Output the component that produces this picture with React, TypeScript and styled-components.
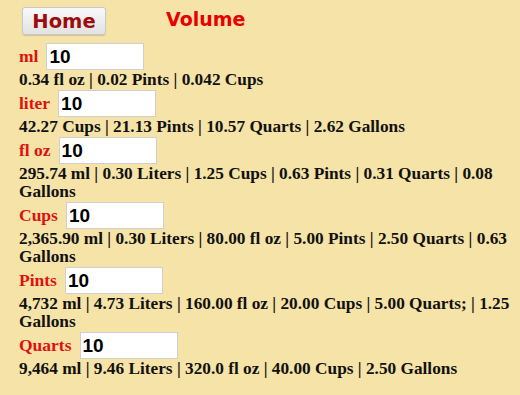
import React, { useState } from "react";
import styled, { createGlobalStyle } from "styled-components";

const GlobalStyle = createGlobalStyle`
  html, body {
    margin: 0;
    padding: 0;
    background: #f5e3a7;
  }
`;

const Page = styled.div`
  padding: 7px 0 0 19px;
  width: 494px;
  font-family: "Liberation Serif", "Times New Roman", serif;
`;

const Header = styled.div`
  display: flex;
  align-items: flex-start;
  height: 35px;
`;

const HomeButton = styled.button`
  margin-left: 3px;
  width: 84px;
  height: 28px;
  padding: 0;
  border: 1px solid #c9c9c9;
  border-radius: 3px;
  background: linear-gradient(#f9f9f9, #e2e2e2);
  box-shadow: 0 1px 1px rgba(0, 0, 0, 0.15);
  color: #9c0c0c;
  font-family: "DejaVu Sans", Verdana, sans-serif;
  font-weight: bold;
  font-size: 19.5px;
  cursor: pointer;
`;

const Title = styled.h1`
  margin: 1px 0 0 60px;
  color: #e80000;
  font-family: "DejaVu Sans", Verdana, sans-serif;
  font-weight: bold;
  font-size: 19px;
  line-height: 22px;
`;

const Unit = styled.div`
  margin: 0;
`;

const InputLine = styled.div`
  display: flex;
  align-items: center;
  height: 29px;
`;

const Label = styled.label`
  color: #e01010;
  font-weight: bold;
  font-size: 17.5px;
  margin-right: 8px;
`;

const Field = styled.input`
  box-sizing: border-box;
  width: 98px;
  height: 27px;
  margin: 0;
  padding: 0 2px;
  border: 1px solid #cfcfcf;
  background: #fff;
  color: #000;
  font-family: "Liberation Sans", Arial, sans-serif;
  font-weight: bold;
  font-size: 19px;
  outline: none;
`;

const Result = styled.div`
  font-weight: bold;
  font-size: 17.3px;
  line-height: 18px;
  color: #111;
`;

const units = [
  { name: "ml", result: "0.34 fl oz | 0.02 Pints | 0.042 Cups" },
  { name: "liter", result: "42.27 Cups | 21.13 Pints | 10.57 Quarts | 2.62 Gallons" },
  { name: "fl oz", result: "295.74 ml | 0.30 Liters | 1.25 Cups | 0.63 Pints | 0.31 Quarts | 0.08 Gallons" },
  { name: "Cups", result: "2,365.90 ml | 0.30 Liters | 80.00 fl oz | 5.00 Pints | 2.50 Quarts | 0.63 Gallons" },
  { name: "Pints", result: "4,732 ml | 4.73 Liters | 160.00 fl oz | 20.00 Cups | 5.00 Quarts; | 1.25 Gallons" },
  { name: "Quarts", result: "9,464 ml | 9.46 Liters | 320.0 fl oz | 40.00 Cups | 2.50 Gallons" },
];

export default function App() {
  const [values, setValues] = useState<string[]>(units.map(() => "10"));

  return (
    <Page>
      <GlobalStyle />
      <Header>
        <HomeButton>Home</HomeButton>
        <Title>Volume</Title>
      </Header>
      {units.map((u, i) => (
        <Unit key={u.name}>
          <InputLine>
            <Label>{u.name}</Label>
            <Field
              value={values[i]}
              onChange={(e) => {
                const next = [...values];
                next[i] = e.target.value;
                setValues(next);
              }}
            />
          </InputLine>
          <Result>{u.result}</Result>
        </Unit>
      ))}
    </Page>
  );
}
